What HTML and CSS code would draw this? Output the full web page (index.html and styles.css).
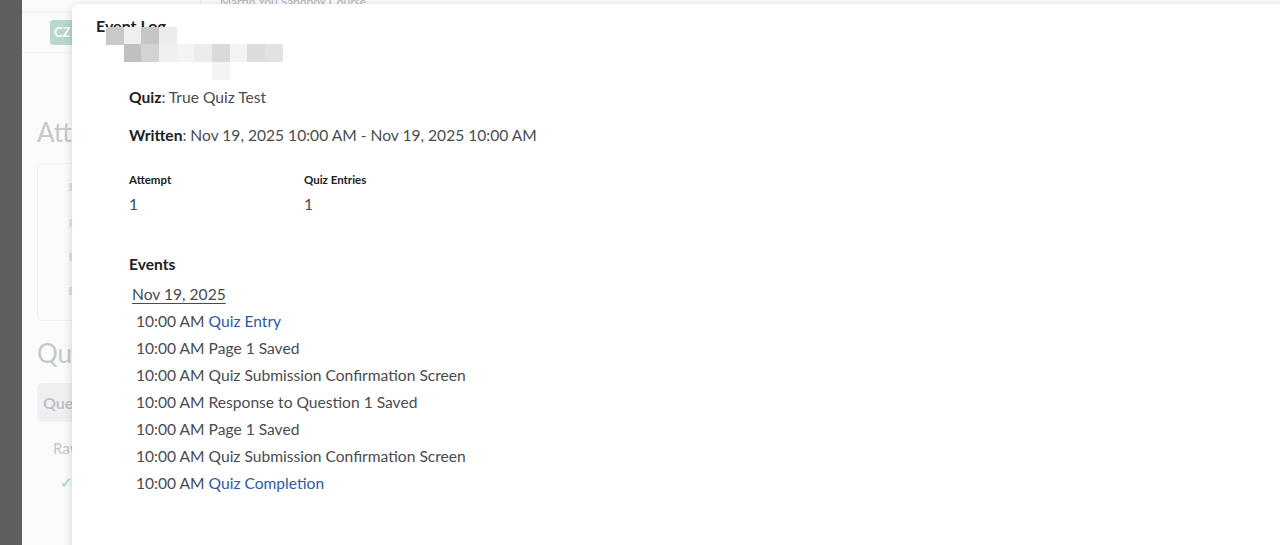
FILE: index.html
```html
<!DOCTYPE html>
<html>
<head lang="en">
    <meta charset="UTF-8">
    <title>Event Log</title>
    <link rel="stylesheet" href="styles.css">
</head>
<body>
<div id="frame">
    <div id="strip"></div>
    <div id="page">
        <div class="topbar">
            <span class="course">Martin You Sandbox Course</span>
        </div>
        <div class="userbar">
            <span class="badge">CZ</span>
        </div>
        <div class="main">
            <h2 class="heading">Attempt</h2>
            <div class="card">
                <span class="mark m1"></span>
                <span class="mark m2"></span>
                <span class="mark m3"></span>
                <span class="mark m4"></span>
            </div>
            <h2 class="heading">Quiz</h2>
            <div class="tab">Questions</div>
            <div class="row-ra">Raw</div>
            <div class="check">&#10003;</div>
        </div>
    </div>
</div>

<div id="dialog">
    <h1 class="title">Event Log</h1>
    <div class="mosaic">
        <span style="left:10px;top:9px;background:#c9c9c9"></span>
        <span style="left:28px;top:9px;background:#eef0ef"></span>
        <span style="left:45px;top:9px;background:#c5c5c5"></span>
        <span style="left:63px;top:9px;background:#ebebeb"></span>
        <span style="left:28px;top:26px;background:#bfc1c0"></span>
        <span style="left:45px;top:26px;background:#d3d3d3"></span>
        <span style="left:63px;top:26px;background:#f0f0f0"></span>
        <span style="left:81px;top:26px;background:#f3f3f3"></span>
        <span style="left:98px;top:26px;background:#ececec"></span>
        <span style="left:116px;top:26px;background:#dadada"></span>
        <span style="left:134px;top:26px;background:#f3f3f3"></span>
        <span style="left:151px;top:26px;background:#dcdcdc"></span>
        <span style="left:169px;top:26px;background:#e2e2e2"></span>
        <span style="left:116px;top:44px;background:#f4f4f4"></span>
    </div>
    <div class="body">
        <p class="line"><b>Quiz</b>: True Quiz Test</p>
        <p class="line"><b>Written</b>: Nov 19, 2025 10:00 AM - Nov 19, 2025 10:00 AM</p>
        <div class="stats">
            <div class="stat">
                <div class="label">Attempt</div>
                <div class="value">1</div>
            </div>
            <div class="stat">
                <div class="label">Quiz Entries</div>
                <div class="value">1</div>
            </div>
        </div>
        <h2 class="events">Events</h2>
        <div class="date">Nov 19, 2025</div>
        <ul class="log">
            <li>10:00 AM <a href="#">Quiz Entry</a></li>
            <li>10:00 AM Page 1 Saved</li>
            <li>10:00 AM Quiz Submission Confirmation Screen</li>
            <li>10:00 AM Response to Question 1 Saved</li>
            <li>10:00 AM Page 1 Saved</li>
            <li>10:00 AM Quiz Submission Confirmation Screen</li>
            <li>10:00 AM <a href="#">Quiz Completion</a></li>
        </ul>
    </div>
</div>
</body>
</html>
```
FILE: styles.css
```css
* {
    margin: 0;
    padding: 0;
    box-sizing: border-box;
}

html, body {
    height: 100%;
    overflow: hidden;
}

body {
    font-family: Lato, "Noto Sans", sans-serif;
    color: #494c4e;
    background: #fff;
}

ul {
    list-style: none;
}

a {
    text-decoration: none;
    color: #3259a6;
}

#frame {
    display: flex;
    height: 100%;
}

#strip {
    width: 22px;
    background: #5e5e5e;
    flex-shrink: 0;
}

#page {
    flex: 1;
    background: #fafbfb;
    color: #c7c9cb;
}

.topbar {
    height: 13px;
    border-bottom: 1px solid #eceeef;
    padding-left: 178px;
    overflow: hidden;
}

.course {
    display: block;
    font-size: 12px;
    line-height: 14px;
    margin-top: -5px;
    color: #aeb4bb;
    border-left: 1px solid #eceeef;
    padding-left: 19px;
}

.userbar {
    height: 40px;
    border-bottom: 1px solid #f1f2f3;
    padding: 7px 0 0 28px;
}

.badge {
    display: inline-block;
    width: 30px;
    height: 25px;
    background: #b7d7cf;
    color: #fff;
    border-radius: 3px;
    font-size: 13px;
    font-weight: 700;
    line-height: 25px;
    padding-left: 4px;
}

.main {
    padding-left: 15px;
}

.heading {
    font-size: 26px;
    font-weight: 400;
    color: #c6c8ca;
    line-height: 32px;
}

.main .heading:first-child {
    margin-top: 63px;
}

.card {
    position: relative;
    height: 158px;
    margin: 15px 0 16px;
    border: 1px solid #f0f1f2;
    border-radius: 6px;
    background: #fcfcfc;
}

.mark {
    position: absolute;
    left: 31px;
    width: 3px;
    height: 8px;
    background: #e6e6e6;
}

.m1 { top: 19px; }
.m2 { top: 55px; background: #f4e7c4; }
.m3 { top: 89px; }
.m4 { top: 123px; background: #f3dcdc; }

.tab {
    margin-top: 14px;
    height: 39px;
    background: #eef0f2;
    border-radius: 6px 0 0 6px;
    padding: 0 0 0 6px;
    font-size: 16px;
    font-weight: 700;
    line-height: 39px;
    color: #bfc3c6;
    overflow: hidden;
    white-space: nowrap;
}

.row-ra {
    margin-top: 17px;
    padding-left: 16px;
    font-size: 15px;
    color: #c4c6c8;
    white-space: nowrap;
    overflow: hidden;
}

.check {
    margin-top: 16px;
    padding-left: 23px;
    color: #b7dcc6;
    font-size: 15px;
    font-weight: 700;
}

#dialog {
    position: absolute;
    left: 72px;
    top: 4px;
    right: -20px;
    bottom: -20px;
    background: #fff;
    border-radius: 7px;
    box-shadow: 0 2px 10px rgba(0, 0, 0, 0.18);
}

.title {
    font-size: 16px;
    font-weight: 700;
    color: #202122;
    line-height: 20px;
    padding: 12px 0 0 24px;
}

.mosaic {
    position: absolute;
    left: 24px;
    top: 14px;
}

.mosaic span {
    position: absolute;
    width: 18px;
    height: 18px;
}

.body {
    padding: 49px 0 0 57px;
}

.line {
    font-size: 15.6px;
    line-height: 24px;
    margin-bottom: 14px;
}

.line b {
    color: #202122;
}

.stats {
    display: flex;
    margin-top: 24px;
}

.stat {
    width: 175px;
}

.label {
    font-size: 11.5px;
    font-weight: 700;
    line-height: 18px;
    color: #202122;
}

.value {
    font-size: 15.6px;
    line-height: 24px;
    margin-top: 3px;
}

.events {
    font-size: 15.6px;
    font-weight: 700;
    color: #202122;
    line-height: 24px;
    margin-top: 36px;
}

.date {
    display: inline-block;
    font-size: 15.6px;
    line-height: 27px;
    margin: 5px 0 0 3px;
    text-decoration: underline;
    text-decoration-thickness: 1px;
    text-underline-offset: 3px;
}

.log {
    padding-left: 7px;
}

.log li {
    font-size: 15.6px;
    line-height: 27px;
}
```
